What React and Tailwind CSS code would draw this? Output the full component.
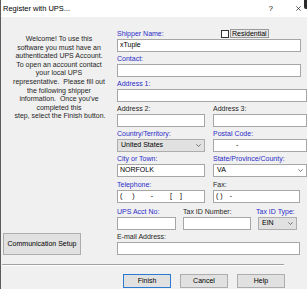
import React from "react";

const lines = [
  "Welcome! To use this",
  "software you must have an",
  "authenticated UPS Account.",
  "To open an account contact",
  "your local UPS",
  "representative.  Please fill out",
  "the following shipper",
  "information.  Once you've",
  "completed this",
  " step, select the Finish button.",
];

function Label({ blue, className = "", children }) {
  return (
    <div
      className={`h-[11px] leading-[11px] whitespace-nowrap ${
        blue ? "text-[#2b2bc8]" : "text-[#1f1f1f]"
      } ${className}`}
    >
      {children}
    </div>
  );
}

function Input({ className = "", children }) {
  return (
    <div
      className={`h-[13px] border border-[#a6a6a6] bg-white flex items-center pl-[2px] whitespace-pre text-black ${className}`}
    >
      {children}
    </div>
  );
}

function Chevron() {
  return (
    <svg width="5" height="3" viewBox="0 0 5 3" className="shrink-0">
      <path d="M0.4 0.4 L2.5 2.5 L4.6 0.4" fill="none" stroke="#555" strokeWidth="0.8" />
    </svg>
  );
}

function Select({ grey, className = "", children }) {
  return (
    <div
      className={`h-[13px] border flex items-center justify-between pl-[3px] pr-[3px] text-black ${
        grey ? "bg-[#e1e1e1] border-[#adadad]" : "bg-white border-[#a6a6a6]"
      } ${className}`}
    >
      <span>{children}</span>
      <Chevron />
    </div>
  );
}

function Button({ primary, className = "", children }) {
  return (
    <div
      className={`h-[14px] w-[48px] flex items-center justify-center bg-[#e1e1e1] border ${
        primary ? "border-[#2a7ad2]" : "border-[#adadad]"
      } ${className}`}
    >
      {children}
    </div>
  );
}

export default function App() {
  return (
    <div className="relative w-[307px] h-[289px] overflow-hidden bg-[#f0f0f0] border-l border-[#5c5c5c] font-['Liberation_Sans',Arial,sans-serif] text-[7px] text-[#1f1f1f]">
      {/* title bar */}
      <div className="h-[17px] bg-white flex items-center">
        <span className="pl-[2px] text-[7.5px] text-black">Register with UPS...</span>
        <div className="ml-auto flex items-center">
          <span className="text-[7.5px] text-black">?</span>
          <svg width="5" height="5" viewBox="0 0 5 5" className="ml-[23px] mr-[6px]">
            <path d="M0.3 0.3 L4.7 4.7 M4.7 0.3 L0.3 4.7" stroke="#222" strokeWidth="0.7" />
          </svg>
        </div>
      </div>
      <div className="absolute top-0 right-0 w-[3px] h-[9px] bg-[#2a2a2a] rounded-bl-[2px]" />

      {/* main */}
      <div className="flex pt-[11px]">
        <div className="w-[116px] flex flex-col">
          <div className="mt-[7px] text-center leading-[8.6px] text-[#1f1f1f]">
            {lines.map((l) => (
              <div key={l} className="whitespace-pre">
                {l}
              </div>
            ))}
          </div>
          <div className="mt-auto ml-[2px] w-[78px] h-[22px] bg-[#e1e1e1] border border-[#adadad] flex items-center justify-center text-black">
            Communication Setup
          </div>
        </div>

        <div className="w-[190px] flex flex-col">
          <div className="mb-[1px]">
            <div className="flex items-center">
              <Label blue className="w-[104px]">Shipper Name:</Label>
              <div className="w-[8px] h-[8px] border border-[#333] bg-white" />
              <div className="h-[9px] px-[1px] ml-[1px] border border-[#9a9a9a] bg-[#e6e6e6] leading-[7px] text-black">
                Residential
              </div>
            </div>
            <Input className="w-[184px]">xTuple</Input>
          </div>

          <div className="mb-[1px]">
            <Label blue>Contact:</Label>
            <Input className="w-[184px]" />
          </div>

          <div className="mb-[1px]">
            <Label blue>Address 1:</Label>
            <Input className="w-[190px]" />
          </div>

          <div className="mb-[1px] flex gap-[8px]">
            <div className="w-[88px]">
              <Label>Address 2:</Label>
              <Input />
            </div>
            <div className="w-[94px]">
              <Label>Address 3:</Label>
              <Input />
            </div>
          </div>

          <div className="mb-[1px] flex gap-[8px]">
            <div className="w-[88px]">
              <Label blue>Country/Territory:</Label>
              <Select grey>United States</Select>
            </div>
            <div className="w-[94px]">
              <Label blue>Postal Code:</Label>
              <Input className="pl-[22px]">-</Input>
            </div>
          </div>

          <div className="mb-[1px] flex gap-[8px]">
            <div className="w-[88px]">
              <Label blue>City or Town:</Label>
              <Input>NORFOLK</Input>
            </div>
            <div className="w-[94px]">
              <Label blue>State/Province/County:</Label>
              <Select className="pl-[2px]">VA</Select>
            </div>
          </div>

          <div className="mt-[1px] mb-[1px] flex gap-[8px]">
            <div className="w-[88px]">
              <Label blue>Telephone:</Label>
              <Input>
                <span>(</span>
                <span className="ml-[10px]">)</span>
                <span className="ml-[16px]">-</span>
                <span className="ml-[17px]">[</span>
                <span className="ml-[8px]">]</span>
              </Input>
            </div>
            <div className="w-[87px]">
              <Label>Fax:</Label>
              <Input>
                <span>(</span>
                <span className="ml-[2px]">)</span>
                <span className="ml-[7px]">-</span>
              </Input>
            </div>
          </div>

          <div className="mt-[2px] mb-[1px] flex">
            <div className="w-[59px]">
              <Label blue>UPS Acct No:</Label>
              <Input />
            </div>
            <div className="w-[68px] ml-[7px]">
              <Label>Tax ID Number:</Label>
              <Input />
            </div>
            <div className="w-[41px] ml-[5px]">
              <Label blue>Tax ID Type:</Label>
              <Select grey className="ml-[2px] w-[39px]">EIN</Select>
            </div>
          </div>

          <div>
            <Label>E-mail Address:</Label>
            <Input className="w-[183px]" />
          </div>
        </div>
      </div>

      {/* separator */}
      <div className="mt-[9px] ml-[1px] w-[282px] border-t border-b border-t-[#a0a0a0] border-b-white" />

      {/* buttons */}
      <div className="mt-[8px] ml-[122px] flex gap-[9px] text-black">
        <Button primary>Finish</Button>
        <Button>Cancel</Button>
        <Button>Help</Button>
      </div>
    </div>
  );
}
